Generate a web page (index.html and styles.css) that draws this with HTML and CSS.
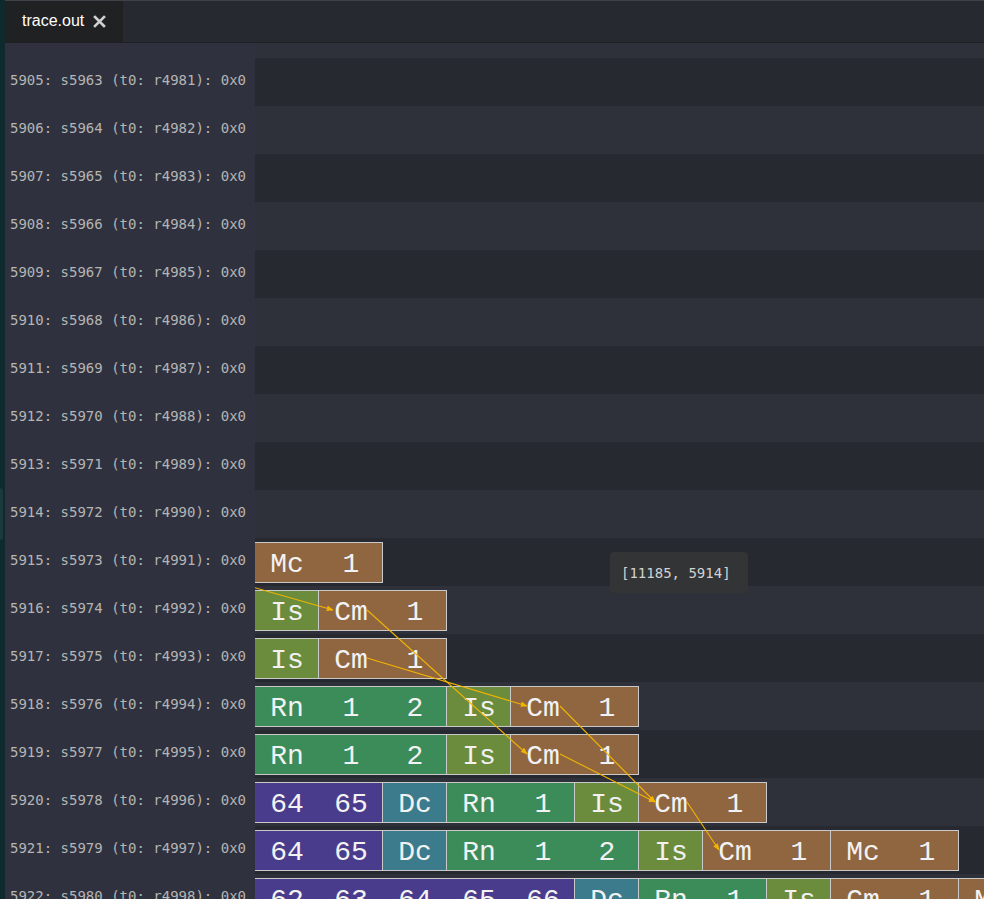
FILE: index.html
```html
<!DOCTYPE html>
<html>
<head>
<meta charset="utf-8">
<link rel="stylesheet" href="styles.css">
</head>
<body>
<div class="app">
  <div class="edge"><div class="edge-thumb"></div></div>
  <div class="main">
    <div class="tabbar">
      <div class="tab">
        <span class="tab-title">trace.out</span>
        <svg class="tab-close" width="13" height="13" viewBox="0 0 13 13"><path d="M2 2 L11 11 M11 2 L2 11" stroke="#d0d0d0" stroke-width="2.6" stroke-linecap="square"/></svg>
      </div>
    </div>
    <div class="view">
      <div class="labels">
        <div class="label-spacer"></div>
        <div class="label">5905: s5963 (t0: r4981): 0x0</div>
        <div class="label">5906: s5964 (t0: r4982): 0x0</div>
        <div class="label">5907: s5965 (t0: r4983): 0x0</div>
        <div class="label">5908: s5966 (t0: r4984): 0x0</div>
        <div class="label">5909: s5967 (t0: r4985): 0x0</div>
        <div class="label">5910: s5968 (t0: r4986): 0x0</div>
        <div class="label">5911: s5969 (t0: r4987): 0x0</div>
        <div class="label">5912: s5970 (t0: r4988): 0x0</div>
        <div class="label">5913: s5971 (t0: r4989): 0x0</div>
        <div class="label">5914: s5972 (t0: r4990): 0x0</div>
        <div class="label">5915: s5973 (t0: r4991): 0x0</div>
        <div class="label">5916: s5974 (t0: r4992): 0x0</div>
        <div class="label">5917: s5975 (t0: r4993): 0x0</div>
        <div class="label">5918: s5976 (t0: r4994): 0x0</div>
        <div class="label">5919: s5977 (t0: r4995): 0x0</div>
        <div class="label">5920: s5978 (t0: r4996): 0x0</div>
        <div class="label">5921: s5979 (t0: r4997): 0x0</div>
        <div class="label">5922: s5980 (t0: r4998): 0x0</div>
      </div>
      <div class="canvas">
        <div class="row row-light row-spacer"></div>
        <div class="row row-dark"></div>
        <div class="row row-light"></div>
        <div class="row row-dark"></div>
        <div class="row row-light"></div>
        <div class="row row-dark"></div>
        <div class="row row-light"></div>
        <div class="row row-dark"></div>
        <div class="row row-light"></div>
        <div class="row row-dark"></div>
        <div class="row row-light"></div>
        <!-- 5915 -->
        <div class="row row-dark">
          <div class="seg seg-mc n2"><span class="cell">Mc</span><span class="cell">1</span></div>
        </div>
        <!-- 5916 -->
        <div class="row row-light">
          <div class="seg seg-is n1"><span class="cell">Is</span></div>
          <div class="seg seg-mc n2"><span class="cell">Cm</span><span class="cell">1</span></div>
        </div>
        <!-- 5917 -->
        <div class="row row-dark">
          <div class="seg seg-is n1"><span class="cell">Is</span></div>
          <div class="seg seg-mc n2"><span class="cell">Cm</span><span class="cell">1</span></div>
        </div>
        <!-- 5918 -->
        <div class="row row-light">
          <div class="seg seg-rn n3"><span class="cell">Rn</span><span class="cell">1</span><span class="cell">2</span></div>
          <div class="seg seg-is n1"><span class="cell">Is</span></div>
          <div class="seg seg-mc n2"><span class="cell">Cm</span><span class="cell">1</span></div>
        </div>
        <!-- 5919 -->
        <div class="row row-dark">
          <div class="seg seg-rn n3"><span class="cell">Rn</span><span class="cell">1</span><span class="cell">2</span></div>
          <div class="seg seg-is n1"><span class="cell">Is</span></div>
          <div class="seg seg-mc n2"><span class="cell">Cm</span><span class="cell">1</span></div>
        </div>
        <!-- 5920 -->
        <div class="row row-light">
          <div class="seg seg-fe n2"><span class="cell">64</span><span class="cell">65</span></div>
          <div class="seg seg-dc n1"><span class="cell">Dc</span></div>
          <div class="seg seg-rn n2"><span class="cell">Rn</span><span class="cell">1</span></div>
          <div class="seg seg-is n1"><span class="cell">Is</span></div>
          <div class="seg seg-mc n2"><span class="cell">Cm</span><span class="cell">1</span></div>
        </div>
        <!-- 5921 -->
        <div class="row row-dark">
          <div class="seg seg-fe n2"><span class="cell">64</span><span class="cell">65</span></div>
          <div class="seg seg-dc n1"><span class="cell">Dc</span></div>
          <div class="seg seg-rn n3"><span class="cell">Rn</span><span class="cell">1</span><span class="cell">2</span></div>
          <div class="seg seg-is n1"><span class="cell">Is</span></div>
          <div class="seg seg-mc n2"><span class="cell">Cm</span><span class="cell">1</span></div>
          <div class="seg seg-mc n2"><span class="cell">Mc</span><span class="cell">1</span></div>
        </div>
        <!-- 5922 -->
        <div class="row row-light">
          <div class="seg seg-fe n5"><span class="cell">62</span><span class="cell">63</span><span class="cell">64</span><span class="cell">65</span><span class="cell">66</span></div>
          <div class="seg seg-dc n1"><span class="cell">Dc</span></div>
          <div class="seg seg-rn n2"><span class="cell">Rn</span><span class="cell">1</span></div>
          <div class="seg seg-is n1"><span class="cell">Is</span></div>
          <div class="seg seg-mc n2"><span class="cell">Cm</span><span class="cell">1</span></div>
          <div class="seg seg-mc n2"><span class="cell">Mc</span><span class="cell">1</span></div>
        </div>

        <svg class="deps" width="729" height="856" viewBox="0 0 729 856">
          <defs>
            <marker id="ah" viewBox="0 0 10 10" refX="9" refY="5" markerWidth="7" markerHeight="7" markerUnits="userSpaceOnUse" orient="auto">
              <path d="M0 1 L10 5 L0 9 z" fill="#f2b400"/>
            </marker>
          </defs>
          <g stroke="#f2b400" stroke-width="1.1" fill="none">
            <line x1="-55" y1="529" x2="78" y2="567" marker-end="url(#ah)"/>
            <line x1="112" y1="567" x2="272" y2="711" marker-end="url(#ah)"/>
            <line x1="112" y1="615" x2="272" y2="663" marker-end="url(#ah)"/>
            <line x1="305" y1="663" x2="400" y2="759" marker-end="url(#ah)"/>
            <line x1="305" y1="711" x2="400" y2="759" marker-end="url(#ah)"/>
            <line x1="432" y1="759" x2="464" y2="807" marker-end="url(#ah)"/>
          </g>
        </svg>

        <div class="tooltip">[11185, 5914]</div>
      </div>
    </div>
  </div>
</div>
</body>
</html>
```
FILE: styles.css
```css
html, body {
  margin: 0;
  padding: 0;
  width: 984px;
  height: 899px;
  overflow: hidden;
  background: #262930;
}

.app {
  display: flex;
  width: 984px;
  height: 899px;
}

.edge {
  width: 5px;
  flex: none;
  background: #0f2a2d;
  position: relative;
}

.edge-thumb {
  position: absolute;
  left: 0;
  top: 488px;
  width: 3px;
  height: 52px;
  border-radius: 0 3px 3px 0;
  background: #1a3a3d;
}

.main {
  flex: 1;
  display: flex;
  flex-direction: column;
  min-width: 0;
}

.tabbar {
  height: 41px;
  flex: none;
  border-top: 1px solid #3e4147;
  border-bottom: 1px solid #1e2024;
  background: #262930;
  display: flex;
}

.tab {
  display: flex;
  align-items: center;
  gap: 9px;
  padding: 0 17px;
  background: #1f2123;
  height: 41px;
  box-sizing: border-box;
  width: 118px;
}

.tab-title {
  font-family: "Liberation Sans", Arial, sans-serif;
  font-size: 16px;
  color: #ffffff;
  padding-bottom: 1px;
}

.tab-close {
  display: block;
  flex: none;
}

.view {
  flex: 1;
  display: flex;
  min-height: 0;
  overflow: hidden;
}

.labels {
  width: 250px;
  flex: none;
  background: #2f323e;
  display: flex;
  flex-direction: column;
}

.label-spacer {
  height: 15px;
  flex: none;
}

.label {
  height: 48px;
  flex: none;
  box-sizing: border-box;
  padding-bottom: 4px;
  display: flex;
  align-items: center;
  padding-left: 5px;
  font-family: "DejaVu Sans Mono", "Liberation Mono", monospace;
  font-size: 14px;
  color: #b5b5b5;
  white-space: nowrap;
}

.canvas {
  flex: 1;
  position: relative;
  overflow: hidden;
  display: flex;
  flex-direction: column;
}

.row {
  height: 48px;
  flex: none;
  display: flex;
  align-items: flex-start;
  margin-left: -1px;
}

.row-spacer {
  height: 15px;
}

.row-dark {
  background: #262930;
}

.row-light {
  background: #2e313a;
}

.seg {
  margin-top: 4px;
  margin-right: -1px;
  height: 41px;
  box-sizing: border-box;
  border: 1px solid #c9c9c9;
  display: flex;
  overflow: hidden;
  flex: none;
}

.seg.n1 { width: 65px; }
.seg.n2 { width: 129px; }
.seg.n3 { width: 193px; }
.seg.n5 { width: 321px; }

.cell {
  width: 64px;
  flex: none;
  height: 39px;
  box-sizing: border-box;
  padding-top: 6px;
  line-height: 31px;
  text-align: center;
  font-family: "Liberation Mono", "DejaVu Sans Mono", monospace;
  font-size: 28px;
  color: #f2f2f2;
}

.seg-mc { background: #8f6640; }
.seg-is { background: #6b8c3c; }
.seg-rn { background: #3c8c5a; }
.seg-dc { background: #3c7b8c; }
.seg-fe { background: #4a3c8c; }

.deps {
  position: absolute;
  left: 0;
  top: 0;
  overflow: visible;
  pointer-events: none;
}

.tooltip {
  position: absolute;
  left: 355px;
  top: 509px;
  width: 138px;
  height: 41px;
  box-sizing: border-box;
  padding-left: 11px;
  display: flex;
  align-items: center;
  background: #333436;
  border-radius: 4px;
  font-family: "DejaVu Sans Mono", "Liberation Mono", monospace;
  font-size: 14px;
  color: #d2d2d2;
}
```
